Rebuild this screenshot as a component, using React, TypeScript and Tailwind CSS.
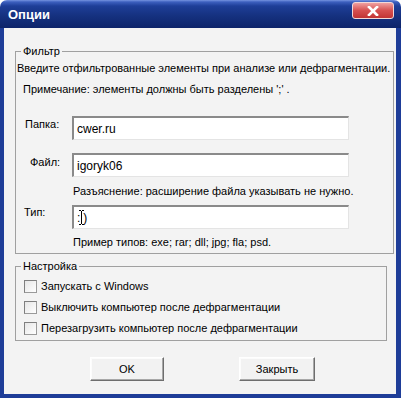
import React from "react";

function Input({ value, cursor }: { value: string; cursor?: boolean }) {
  return (
    <div className="relative w-[277px] h-[24px] bg-white border-t-2 border-l-2 border-t-[#8a8a8a] border-l-[#8a8a8a] border-b border-r border-b-[#e4e4e4] border-r-[#e4e4e4] flex items-center pl-[3px] text-[12px] leading-[14px]">
      {cursor ? (
        <>
          <span>:</span>
          <span className="ml-[3px]">)</span>
          <svg className="absolute left-[5px] top-[3px]" width="5" height="15" viewBox="0 0 5 15">
            <path d="M0 0.5h2M3 0.5h2M2.5 1v13M0 14.5h2M3 14.5h2" stroke="#000" strokeWidth="1" fill="none" />
          </svg>
        </>
      ) : (
        <span>{value}</span>
      )}
    </div>
  );
}

function Check({ label }: { label: string }) {
  return (
    <div className="flex items-center h-[13px]">
      <div className="w-[13px] h-[13px] border border-[#9a9a9a] border-t-[#7f7f7f] border-l-[#7f7f7f] bg-[linear-gradient(135deg,#e6e6e6,#ffffff)]" />
      <span className="ml-[4px]">{label}</span>
    </div>
  );
}

function Btn({ label, w }: { label: string; w: string }) {
  return (
    <div
      className={`${w} h-[24px] flex items-center justify-center bg-[#f2f2f2] border border-t-white border-l-white border-b-[#6e6e6e] border-r-[#6e6e6e] shadow-[inset_-1px_-1px_0_#a8a8a8,inset_1px_1px_0_#fcfcfc]`}
    >
      {label}
    </div>
  );
}

export default function App() {
  return (
    <div className="w-[401px] h-[398px] bg-white flex flex-col font-['Liberation_Sans',Arial,sans-serif] text-[11px] leading-[13px] text-black">
      <div className="h-[28px] shrink-0 rounded-t-[7px] flex items-start bg-[linear-gradient(180deg,#7694e0_0px,#3c5fbe_2px,#1e3e98_6px,#15317f_16px,#0d246a_28px)]">
        <span className="ml-[8px] mt-[7px] text-white font-bold text-[13px] leading-[16px]">Опции</span>
        <div className="ml-auto mr-[7px] mt-[2px] w-[42px] h-[17px] rounded-[3px] border border-[#f1d8d8] bg-[linear-gradient(180deg,#f0a0a0,#d65050_50%,#c23434)] flex items-center justify-center">
          <svg width="12" height="10" viewBox="0 0 12 10">
            <path d="M2 1L10 9M10 1L2 9" stroke="#ffffff" strokeWidth="2.6" strokeLinecap="square" />
          </svg>
        </div>
      </div>
      <div className="flex-1 flex flex-col bg-[#f3f3f3] border-l-4 border-r-[5px] border-b-4 border-[#1e3d98]">
        {/* Фильтр */}
        <div className="relative ml-[11px] mt-[23px] w-[379px] h-[203px] border border-[#a0a0a0] flex flex-col">
          <span className="absolute left-[5px] top-[-7px] px-[2px] bg-[#f3f3f3]">Фильтр</span>
          <div className="pl-[1px] mt-[10px]">Введите отфильтрованные элементы при анализе или дефрагментации.</div>
          <div className="pl-[7px] mt-[8px]">Примечание: элементы должны быть разделены ';' .</div>
          <div className="flex mt-[20px]">
            <div className="w-[56px] pl-[9px] pt-[2px]">Папка:</div>
            <Input value="cwer.ru" />
          </div>
          <div className="flex mt-[13px]">
            <div className="w-[56px] pl-[14px] pt-[3px]">Файл:</div>
            <Input value="igoryk06" />
          </div>
          <div className="pl-[57px] mt-[8px]">Разъяснение: расширение файла указывать не нужно.</div>
          <div className="flex mt-[7px]">
            <div className="w-[56px] pl-[8px] pt-[1px]">Тип:</div>
            <Input value=":)" cursor />
          </div>
          <div className="pl-[57px] mt-[7px]">Пример типов: exe; rar; dll; jpg; fla; psd.</div>
        </div>
        {/* Настройка */}
        <div className="relative ml-[11px] mt-[12px] w-[372px] h-[75px] border border-[#a0a0a0] flex flex-col gap-[8px] pl-[8px] pt-[13px]">
          <span className="absolute left-[5px] top-[-7px] px-[2px] bg-[#f3f3f3]">Настройка</span>
          <Check label="Запускать с Windows" />
          <Check label="Выключить компьютер после дефрагментации" />
          <Check label="Перезагрузить компьютер после дефрагментации" />
        </div>
        <div className="flex mt-[16px] ml-[86px] gap-[75px]">
          <Btn label="OK" w="w-[74px]" />
          <Btn label="Закрыть" w="w-[76px]" />
        </div>
      </div>
    </div>
  );
}
